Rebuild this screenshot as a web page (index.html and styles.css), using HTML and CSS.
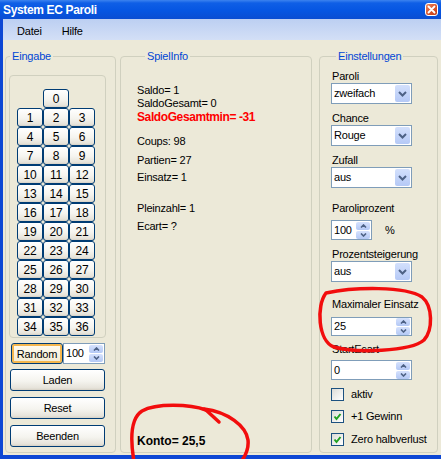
FILE: index.html
```html
<!DOCTYPE html>
<html lang="de">
<head>
    <meta charset="UTF-8">
    <meta name="viewport" content="width=device-width, initial-scale=1.0">
    <title>System EC Paroli</title>
    <link rel="stylesheet" href="styles.css">
</head>
<body>
<div class="window">
    <!-- Title bar -->
    <div class="titlebar">
        <span class="title">System EC Paroli</span>
        <span class="close">
            <svg width="11" height="11" viewBox="0 0 11 11"><path d="M2.5 2.5 L8.5 8.5 M8.5 2.5 L2.5 8.5" stroke="#fff" stroke-width="1.8" stroke-linecap="round"/></svg>
        </span>
    </div>

    <div class="frame">
        <div class="menubar">
            <span>Datei</span>
            <span>Hilfe</span>
        </div>

        <div class="client">
            <!-- Eingabe -->
            <fieldset class="group group-input">
                <legend>Eingabe</legend>
                <div class="numpad">
                    <button class="num zero">0</button>
                    <button class="num new-row">1</button><button class="num">2</button><button class="num">3</button>
                    <button class="num">4</button><button class="num">5</button><button class="num">6</button>
                    <button class="num">7</button><button class="num">8</button><button class="num">9</button>
                    <button class="num">10</button><button class="num">11</button><button class="num">12</button>
                    <button class="num">13</button><button class="num">14</button><button class="num">15</button>
                    <button class="num">16</button><button class="num">17</button><button class="num">18</button>
                    <button class="num">19</button><button class="num">20</button><button class="num">21</button>
                    <button class="num">22</button><button class="num">23</button><button class="num">24</button>
                    <button class="num">25</button><button class="num">26</button><button class="num">27</button>
                    <button class="num">28</button><button class="num">29</button><button class="num">30</button>
                    <button class="num">31</button><button class="num">32</button><button class="num">33</button>
                    <button class="num">34</button><button class="num">35</button><button class="num">36</button>
                </div>
                <div class="random-row">
                    <button class="btn btn-random">Random</button>
                    <div class="spin spin-random">
                        <span class="spin-value">100</span>
                        <span class="arrows">
                            <span class="arrow"><svg width="7" height="4" viewBox="0 0 7 4"><polyline points="1,3.5 3.5,1 6,3.5" fill="none" stroke="#4d6185" stroke-width="1.6"/></svg></span>
                            <span class="arrow"><svg width="7" height="4" viewBox="0 0 7 4"><polyline points="1,0.5 3.5,3 6,0.5" fill="none" stroke="#4d6185" stroke-width="1.6"/></svg></span>
                        </span>
                    </div>
                </div>
                <button class="btn btn-wide btn-laden">Laden</button>
                <button class="btn btn-wide">Reset</button>
                <button class="btn btn-wide">Beenden</button>
            </fieldset>

            <!-- SpielInfo -->
            <fieldset class="group group-info">
                <legend>SpielInfo</legend>
                <p class="stat saldo">Saldo= 1</p>
                <p class="stat">SaldoGesamt= 0</p>
                <p class="stat stat-min">SaldoGesamtmin= -31</p>
                <p class="stat coups">Coups: 98</p>
                <p class="stat partien">Partien= 27</p>
                <p class="stat einsatz">Einsatz= 1</p>
                <p class="stat plein">Pleinzahl= 1</p>
                <p class="stat ecart">Ecart= ?</p>
                <p class="konto">Konto= 25,5</p>
            </fieldset>

            <!-- Einstellungen -->
            <fieldset class="group group-settings">
                <legend>Einstellungen</legend>

                <div class="lbl lbl-paroli">Paroli</div>
                <div class="select">
                    <span>zweifach</span>
                    <span class="drop"><svg width="9" height="6" viewBox="0 0 9 6"><polyline points="1,1 4.5,4.5 8,1" fill="none" stroke="#4d6185" stroke-width="2"/></svg></span>
                </div>

                <div class="lbl lbl-next">Chance</div>
                <div class="select">
                    <span>Rouge</span>
                    <span class="drop"><svg width="9" height="6" viewBox="0 0 9 6"><polyline points="1,1 4.5,4.5 8,1" fill="none" stroke="#4d6185" stroke-width="2"/></svg></span>
                </div>

                <div class="lbl lbl-next">Zufall</div>
                <div class="select">
                    <span>aus</span>
                    <span class="drop"><svg width="9" height="6" viewBox="0 0 9 6"><polyline points="1,1 4.5,4.5 8,1" fill="none" stroke="#4d6185" stroke-width="2"/></svg></span>
                </div>

                <div class="lbl lbl-prozent">Paroliprozent</div>
                <div class="prozent-row">
                    <div class="spin spin-prozent">
                        <span class="spin-value">100</span>
                        <span class="arrows">
                            <span class="arrow"><svg width="7" height="4" viewBox="0 0 7 4"><polyline points="1,3.5 3.5,1 6,3.5" fill="none" stroke="#4d6185" stroke-width="1.6"/></svg></span>
                            <span class="arrow"><svg width="7" height="4" viewBox="0 0 7 4"><polyline points="1,0.5 3.5,3 6,0.5" fill="none" stroke="#4d6185" stroke-width="1.6"/></svg></span>
                        </span>
                    </div>
                    <span class="percent">%</span>
                </div>

                <div class="lbl lbl-next">Prozentsteigerung</div>
                <div class="select select-steig">
                    <span>aus</span>
                    <span class="drop"><svg width="9" height="6" viewBox="0 0 9 6"><polyline points="1,1 4.5,4.5 8,1" fill="none" stroke="#4d6185" stroke-width="2"/></svg></span>
                </div>

                <div class="lbl lbl-max">Maximaler Einsatz</div>
                <div class="spin spin-wide spin-max">
                    <span class="spin-value">25</span>
                    <span class="arrows">
                        <span class="arrow"><svg width="7" height="4" viewBox="0 0 7 4"><polyline points="1,3.5 3.5,1 6,3.5" fill="none" stroke="#4d6185" stroke-width="1.6"/></svg></span>
                        <span class="arrow"><svg width="7" height="4" viewBox="0 0 7 4"><polyline points="1,0.5 3.5,3 6,0.5" fill="none" stroke="#4d6185" stroke-width="1.6"/></svg></span>
                    </span>
                </div>

                <div class="lbl lbl-ecart">StartEcart</div>
                <div class="spin spin-wide spin-ecart">
                    <span class="spin-value">0</span>
                    <span class="arrows">
                        <span class="arrow"><svg width="7" height="4" viewBox="0 0 7 4"><polyline points="1,3.5 3.5,1 6,3.5" fill="none" stroke="#4d6185" stroke-width="1.6"/></svg></span>
                        <span class="arrow"><svg width="7" height="4" viewBox="0 0 7 4"><polyline points="1,0.5 3.5,3 6,0.5" fill="none" stroke="#4d6185" stroke-width="1.6"/></svg></span>
                    </span>
                </div>

                <div class="check check-aktiv">
                    <span class="box"></span>
                    <span>aktiv</span>
                </div>
                <div class="check check-gewinn">
                    <span class="box"><svg width="11" height="11" viewBox="0 0 11 11"><polyline points="2.5,5.5 4.5,8 8.5,3" fill="none" stroke="#21a121" stroke-width="2"/></svg></span>
                    <span>+1 Gewinn</span>
                </div>
                <div class="check check-zero">
                    <span class="box"><svg width="11" height="11" viewBox="0 0 11 11"><polyline points="2.5,5.5 4.5,8 8.5,3" fill="none" stroke="#21a121" stroke-width="2"/></svg></span>
                    <span>Zero halbverlust</span>
                </div>
            </fieldset>
        </div>
    </div>

    <!-- red hand drawn marks on top of the screenshot -->
    <svg class="marks" width="441" height="459" viewBox="0 0 441 459">
        <g fill="none" stroke="#f20d0d" stroke-width="3.5" stroke-linecap="round" stroke-linejoin="round">
            <path d="M206 410 C190 404, 156 403, 142 411 C131 418, 130 438, 134 462"/>
            <path d="M204 409 C228 412, 246 426, 248 440 C249 449, 246 455, 241 462"/>
            <path d="M206 410 L219 422"/>
            <path d="M326 293 C355 287, 405 286, 422 297 C433 306, 433 330, 424 340 C410 352, 355 353, 334 347 C318 341, 316 306, 326 293"/>
        </g>
    </svg>
</div>
</body>
</html>
```

FILE: styles.css
```css
* {
    box-sizing: border-box;
}
body {
    margin: 0;
    background-color: #ece9d8;
    font-family: 'Liberation Sans', Arial, sans-serif;
    font-size: 11px;
    line-height: 13px;
    letter-spacing: -0.2px;
    color: #000;
}
p {
    margin: 0;
}
.window {
    position: relative;
    width: 441px;
    height: 459px;
    overflow: hidden;
}

/* title bar */
.titlebar {
    height: 19px;
    display: flex;
    align-items: center;
    justify-content: space-between;
    padding: 0 3px 0 3px;
    background: linear-gradient(#3c83ef 0, #0f5fe6 3px, #0656e2 55%, #0a4dd2 100%);
}
.title {
    color: #fff;
    font-weight: bold;
    font-size: 12px;
    line-height: 14px;
    letter-spacing: -0.35px;
}
.close {
    width: 13px;
    height: 13px;
    display: flex;
    align-items: center;
    justify-content: center;
    border: 1px solid #fff;
    border-radius: 3px;
    background: linear-gradient(135deg, #ec8a62, #d9512a 55%, #c24019);
}

/* window frame */
.frame {
    height: 440px;
    border-left: 3px solid #0d47d4;
    border-bottom: 4px solid #0d47d4;
}
.menubar {
    height: 21px;
    padding: 6px 0 2px 14px;
    display: flex;
    gap: 20px;
    background: linear-gradient(#bccff2, #d3dff6);
}
.client {
    height: 415px;
    display: flex;
    padding: 10px 0 2px 2px;
}

/* group boxes */
.group {
    margin: 0;
    padding: 0;
    min-width: 0;
    border: 1px solid #d0d0bf;
    border-radius: 4px;
}
.group legend {
    padding: 0 2px;
    color: #0046d5;
    line-height: 13px;
}
.group-input {
    width: 111px;
}
.group-input legend {
    margin-left: 4px;
}
.group-info {
    width: 192px;
    margin-left: 4px;
    padding: 0 0 4px 16px;
    display: flex;
    flex-direction: column;
}
.group-info legend {
    margin-left: 8px;
}
.group-settings {
    width: 119px;
    margin-left: 7px;
    padding-left: 11px;
}
.group-settings legend {
    margin-left: 5px;
}

/* buttons */
.btn, .num {
    font-family: inherit;
    font-size: 11px;
    letter-spacing: -0.2px;
    color: #000;
    padding: 0;
    border: 1px solid #003c74;
    border-radius: 3px;
    background: linear-gradient(#ffffff 0%, #f5f4ef 55%, #e6e3da 90%, #d6d0c5 100%);
}
.numpad {
    width: 97px;
    margin: 12px 0 0 3px;
    padding: 13px 0 1px 7px;
    border: 1px solid #d0d0bf;
    border-radius: 4px;
    display: grid;
    grid-template-columns: repeat(3, 26px);
    grid-auto-rows: 19px;
}
.num {
    font-size: 12px;
}
.zero {
    grid-column: 2;
}
.new-row {
    grid-column: 1;
}
.random-row {
    display: flex;
    margin: 5px 0 0 5px;
}
.btn-random {
    width: 52px;
    height: 21px;
    background: linear-gradient(#fffdf3, #f3ead0);
    box-shadow: inset 0 0 0 2px #f5b74e;
}
.btn-wide {
    display: block;
    width: 95px;
    height: 22px;
    margin: 6px 0 0 4px;
}
.btn-laden {
    margin-top: 5px;
}

/* spin boxes */
.spin {
    display: flex;
    align-items: center;
    justify-content: space-between;
    height: 20px;
    padding: 0 1px 0 2px;
    background: #fff;
    border: 1px solid #7f9db9;
}
.spin-random {
    width: 42px;
    height: 21px;
}
.spin-prozent {
    width: 41px;
}
.spin-wide {
    width: 81px;
}
.spin-max {
    height: 19px;
    margin-top: 6px;
}
.spin-ecart {
    margin-top: 4px;
}
.arrows {
    display: flex;
    flex-direction: column;
    gap: 1px;
    width: 14px;
}
.arrow {
    height: 8px;
    display: flex;
    align-items: center;
    justify-content: center;
    border-radius: 2px;
    background: linear-gradient(#d6e2fd, #b3c8f5);
}

/* select boxes */
.select {
    display: flex;
    align-items: center;
    justify-content: space-between;
    width: 81px;
    height: 21px;
    padding: 0 1px 0 2px;
    background: #fff;
    border: 1px solid #7f9db9;
}
.drop {
    width: 15px;
    height: 17px;
    display: flex;
    align-items: center;
    justify-content: center;
    border-radius: 2px;
    background: linear-gradient(#d3e0fc, #b5c9f6);
}
.select-steig {
    margin-top: 0;
}

/* labels */
.lbl {
    padding-left: 1px;
}
.lbl-paroli {
    margin-top: 7px;
}
.lbl-next {
    margin-top: 8px;
}
.lbl-prozent {
    margin-top: 14px;
}
.lbl-max {
    margin-top: 16px;
}
.lbl-ecart {
    margin-top: 7px;
}
.prozent-row {
    display: flex;
    align-items: center;
    margin-top: 5px;
}
.percent {
    margin-left: 13px;
}

/* check boxes */
.check {
    display: flex;
    align-items: center;
    height: 13px;
    gap: 7px;
}
.box {
    width: 13px;
    height: 13px;
    display: flex;
    align-items: center;
    justify-content: center;
    border: 1px solid #1c5180;
    background: linear-gradient(135deg, #dcdcd7, #ffffff);
}
.check-aktiv {
    margin-top: 8px;
}
.check-gewinn {
    margin-top: 9px;
}
.check-zero {
    margin-top: 10px;
}

/* spiel info */
.saldo {
    margin-top: 21px;
}
.stat-min {
    color: #f00;
    font-weight: bold;
    font-size: 12px;
    line-height: 14px;
    letter-spacing: -0.4px;
}
.coups {
    margin-top: 11px;
}
.partien {
    margin-top: 6px;
}
.einsatz {
    margin-top: 4px;
}
.plein {
    margin-top: 18px;
}
.ecart {
    margin-top: 5px;
}
.konto {
    margin-top: auto;
    font-weight: bold;
    font-size: 12px;
    line-height: 14px;
    letter-spacing: 0;
}

/* annotation overlay */
.marks {
    position: absolute;
    top: 0;
    left: 0;
    pointer-events: none;
}
```
